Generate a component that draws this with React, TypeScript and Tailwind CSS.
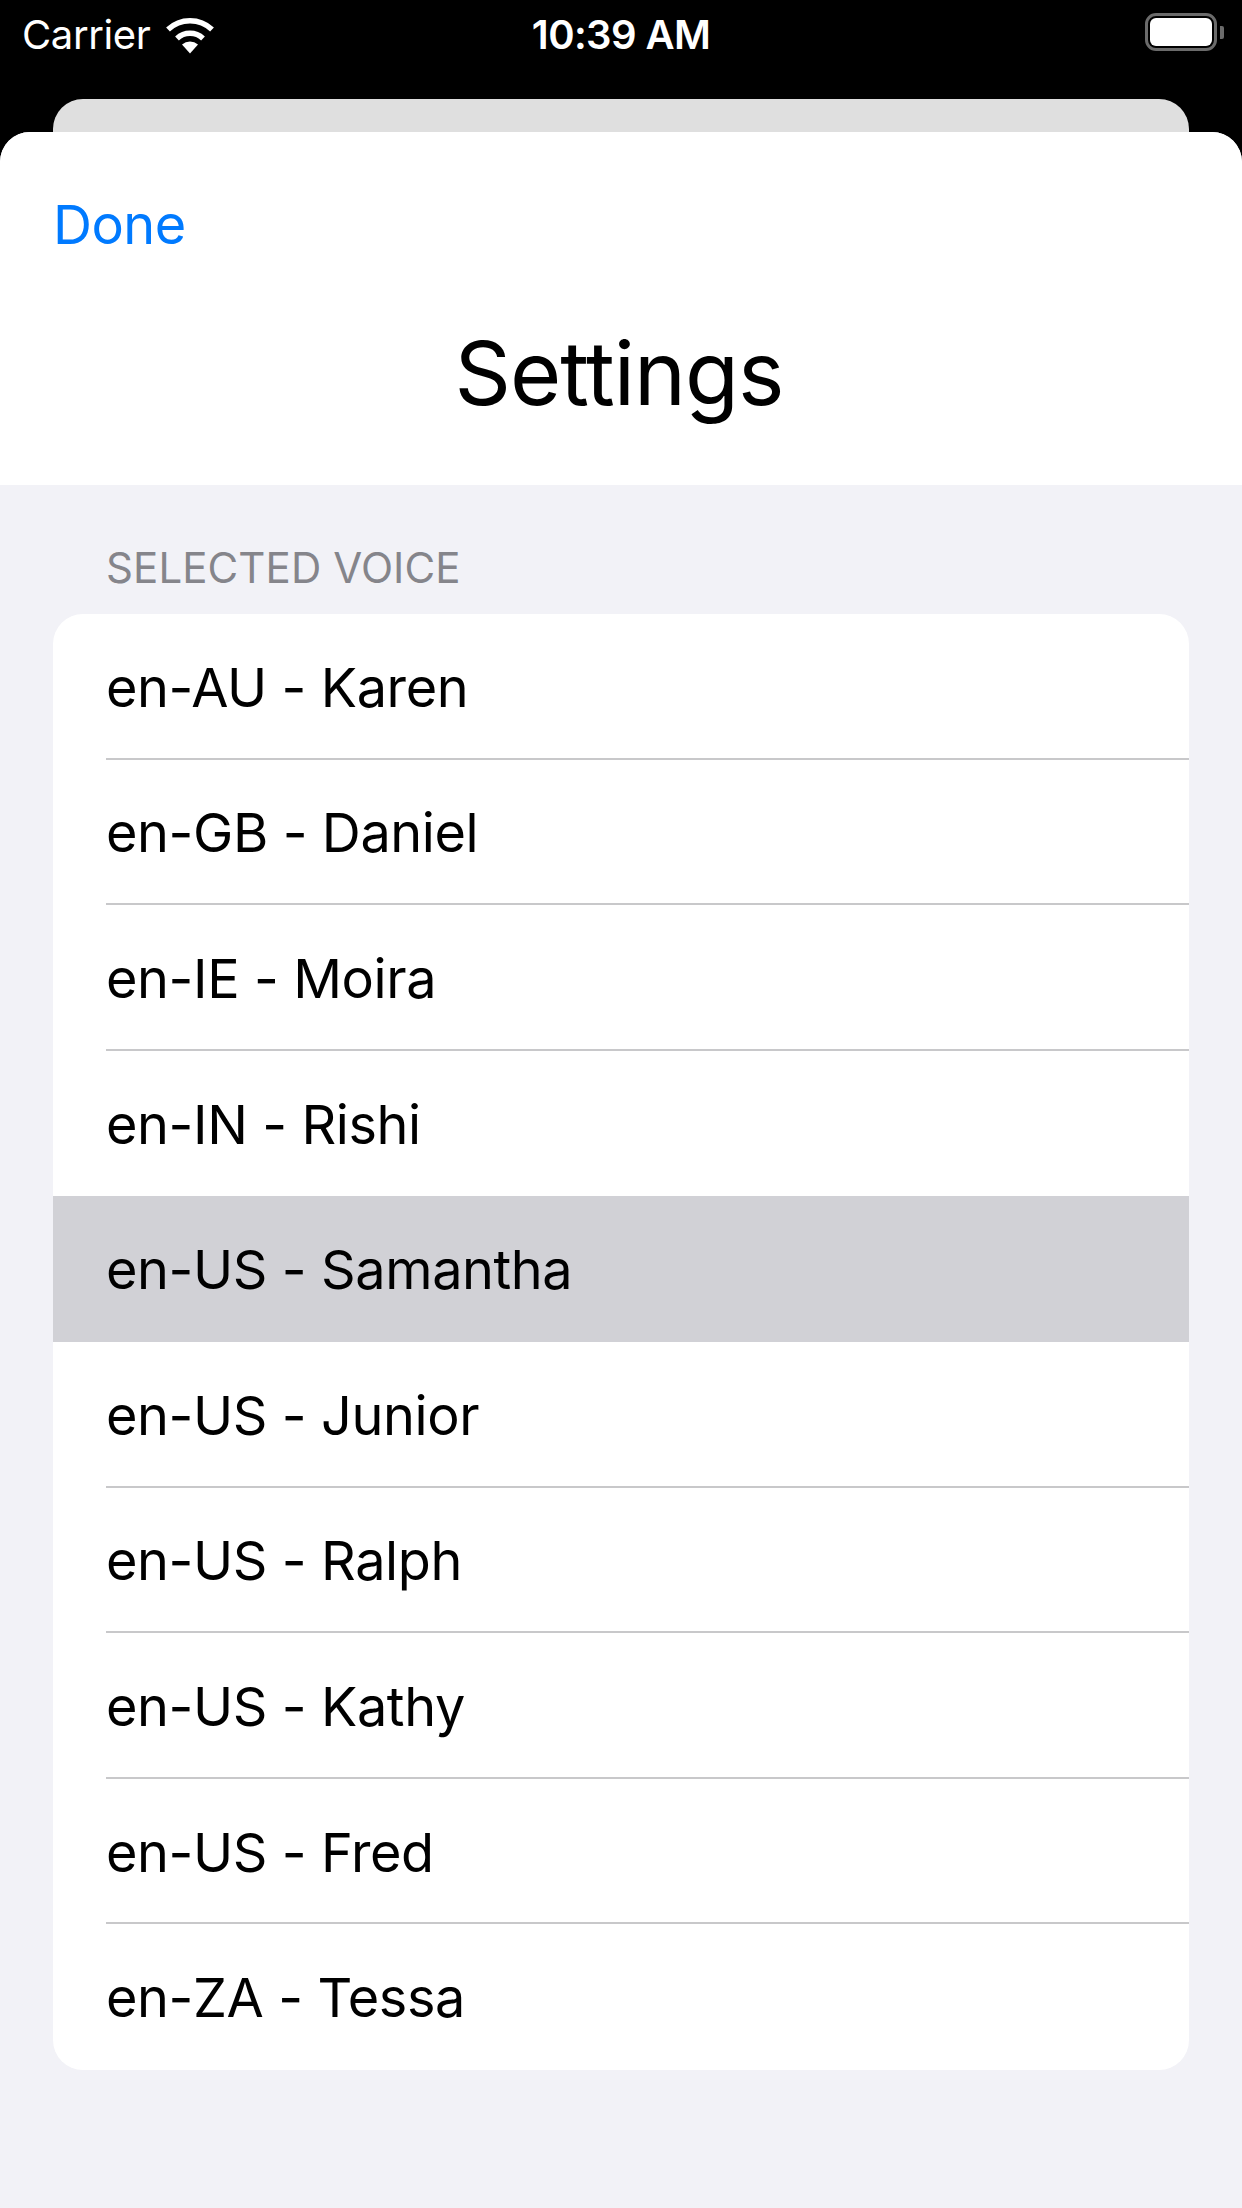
const voices = [
  'en-AU - Karen',
  'en-GB - Daniel',
  'en-IE - Moira',
  'en-IN - Rishi',
  'en-US - Samantha',
  'en-US - Junior',
  'en-US - Ralph',
  'en-US - Kathy',
  'en-US - Fred',
  'en-ZA - Tessa',
]

function Wifi() {
  return (
    <svg width="48" height="38" viewBox="0 0 48 38" className="ml-[16px]">
      <path d="M24 37.500l-8-9a12.500 12.500 0 0 1 16 0z" fill="#fff" />
      <path d="M11 22.500a19 19 0 0 1 26 0" fill="none" stroke="#fff" strokeWidth="5.500" />
      <path d="M2 13.500a32 32 0 0 1 44 0" fill="none" stroke="#fff" strokeWidth="5.500" />
    </svg>
  )
}

function Battery() {
  return (
    <div className="flex items-center">
      <div className="flex h-[38px] w-[72px] rounded-[11px] border-[3px] border-[#6b6b6b] p-[2px]">
        <div className="flex-1 rounded-[6px] bg-white" />
      </div>
      <div className="ml-[3px] h-[13px] w-[4px] rounded-r-[2px] bg-[#6b6b6b]" />
    </div>
  )
}

export default function App() {
  return (
    <div className="flex h-[2208px] w-[1242px] flex-col overflow-hidden bg-black font-['Inter',sans-serif]">
      {/* Status bar */}
      <div className="relative flex h-[99px] shrink-0 items-start justify-between pl-[22px] pr-[18px] pt-[13px] text-white">
        <div className="flex items-center">
          <span className="text-[40px] leading-[44px] tracking-[-0.4px]">Carrier</span>
          <Wifi />
        </div>
        <span className="absolute left-0 right-0 top-[13px] text-center text-[40px] font-semibold leading-[44px] tracking-[-0.6px]">10:39 AM</span>
        <Battery />
      </div>

      {/* Card behind the sheet */}
      <div className="relative mx-[53px] h-[33px] shrink-0 rounded-t-[30px] bg-[#dfdfdf]" />

      {/* Sheet */}
      <div className="flex flex-1 flex-col overflow-hidden rounded-t-[30px] bg-[#f2f2f7]">
        <div className="h-[353px] shrink-0 bg-white px-[53px] pt-[63px]">
          <div className="text-[54px] leading-[60px] tracking-[-0.5px] text-[#007aff]">Done</div>
          <div className="mt-[68px] pr-[4px] text-center text-[88px] leading-[100px] tracking-[-1px] text-black">Settings</div>
        </div>

        <div className="px-[53px]">
          <div className="pl-[53px] pt-[61px] text-[42px] leading-[44px] tracking-[0.1px] text-[#85858b]">SELECTED VOICE</div>
          <div className="mt-[24px] overflow-hidden rounded-[30px] bg-white">
            {voices.map((v, i) => (
              <div key={v} className={`relative flex h-[145.6px] items-center pl-[53px] pt-[1px] text-[54px] tracking-[-0.4px] text-black ${i === 4 ? 'bg-[#d1d1d6]' : ''}`}>
                {v}
                {i < 9 && i !== 3 && i !== 4 && (
                  <div className="absolute bottom-0 left-[53px] right-0 h-[2px] bg-[#c8c8ca]" />
                )}
              </div>
            ))}
          </div>
        </div>
      </div>
    </div>
  )
}
